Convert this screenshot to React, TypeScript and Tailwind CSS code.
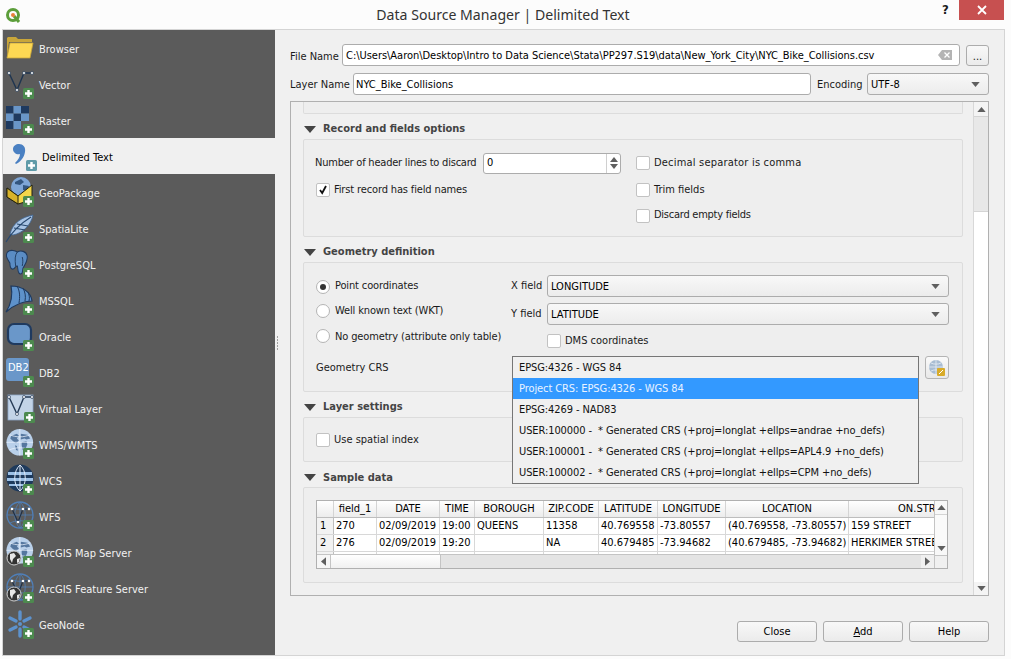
import type { ReactNode } from "react";

function Badge({ x = 18, y = 20, fill = "#4d8a4f" }: { x?: number; y?: number; fill?: string }) {
  return (
    <g transform={`translate(${x} ${y})`}>
      <rect x="0" y="0" width="11" height="11" rx="1.5" fill={fill} />
      <path d="M5.5 2v7M2 5.5h7" stroke="#fff" strokeWidth="2.4" />
    </g>
  );
}

function EarthGlobe() {
  return (
    <g transform="translate(1.500 1) scale(.95)">
      <circle cx="14" cy="14" r="14" fill="#b9d0ea" />
      <path d="M5 7l6-2 2 2-2 3 2 2-3 3-3-2-3-3zM15 5l7 1 3 4-4 1-2-1-4 1zM16 14l5-1 1 3-2 5-3 1-1-5zM9 17l2 1 1 5-2-1z" fill="#55779f" />
      <path d="M0 14h28M14 0v28M3 6c7 3 15 3 22 0M3 22c7-3 15-3 22 0" stroke="#e9f1fb" strokeWidth=".8" fill="none" />
    </g>
  );
}

function VShape({ dx = 0, dy = 0, color = "#1f3550" }: { dx?: number; dy?: number; color?: string }) {
  return (
    <g transform={`translate(${dx} ${dy})`}>
      <path d="M3 6l8 17 7-17 8 0" stroke={color} strokeWidth="1.4" fill="none" />
      <circle cx="3" cy="6" r="1.5" fill="#fff" stroke={color} strokeWidth=".7" />
      <circle cx="11" cy="23" r="1.5" fill="#fff" stroke={color} strokeWidth=".7" />
      <circle cx="18" cy="6" r="1.5" fill="#fff" stroke={color} strokeWidth=".7" />
      <circle cx="26" cy="6" r="1.5" fill="#fff" stroke={color} strokeWidth=".7" />
    </g>
  );
}

function SmallDarkGlobe() {
  return (
    <g>
      <circle cx="9" cy="22" r="7" fill="#333" stroke="#cfcfcf" strokeWidth="1" />
      <path d="M5 18l4-1 2 3-3 3-1 4-2-4zM12 23l3-1-1 4-2 1z" fill="#e6e6e6" />
    </g>
  );
}

function WfsGlobe() {
  return (
    <g transform="translate(1 1)">
      <circle cx="14" cy="14" r="13" fill="none" stroke="#4f7fb8" strokeWidth="1.3" />
      <path d="M1 14h26M14 1v26M4 6c6 3 14 3 20 0M4 22c6-3 14-3 20 0M14 1c-7 6-7 20 0 26M14 1c7 6 7 20 0 26" stroke="#4f7fb8" strokeWidth=".8" fill="none" />
      <path d="M6 8l6 13 5-13h6" stroke="#1f2f45" strokeWidth="1.2" fill="none" />
      <circle cx="6" cy="8" r="1.3" fill="#fff" />
      <circle cx="17" cy="8" r="1.3" fill="#fff" />
      <circle cx="23" cy="8" r="1.3" fill="#fff" />
      <circle cx="12" cy="21" r="1.3" fill="#fff" />
    </g>
  );
}

const icons: Record<string, ReactNode> = {
  Browser: (
    <>
      <path d="M2 6l1-1h8l2 2h14v3H4L2 25z" fill="#c9a63a" />
      <path d="M5 11h23l-3 15H2z" fill="#fdd853" stroke="#c9a63a" strokeWidth=".8" />
    </>
  ),
  Vector: (
    <>
      <VShape dx={1} dy={-1} />
      <Badge />
    </>
  ),
  Raster: (
    <>
      <path d="M1 2h7.500v7.500H1zM16 2h8v7.500h-8zM8.500 9.500H16V17H8.500zM1 17h7.500v8H1z" fill="#1f3a5f" />
      <path d="M8.500 2H16v7.500H8.500zM1 9.500h7.500V17H1zM16 9.500h8V17h-8zM8.500 17H16v8H8.500z" fill="#6996c8" />
      <Badge />
    </>
  ),
  "Delimited Text": (
    <>
      <path d="M5 9c0-3 3-5 6-5 4 0 7 3 6 8-1 6-5 10-9 12l-1-1c3-3 5-6 5-9-3 1-7-1-7-5z" fill="#4a80c2" />
      <Badge x={18} y={20} fill="#5f9ba8" />
    </>
  ),
  GeoPackage: (
    <>
      <circle cx="16" cy="11" r="10" fill="#7ea6d6" />
      <path d="M10 6l6-3 3 3-4 3-5-1zM18 9l6 1-2 5-4-1z" fill="#33567f" />
      <path d="M2 12l11 8 14-11v15l-14 4-11-7z" fill="#f3d54a" stroke="#23230f" strokeWidth="1" />
      <path d="M2 12l11 8v8l-11-7z" fill="#d8b32a" stroke="#23230f" strokeWidth="1" />
      <Badge />
    </>
  ),
  SpatiaLite: (
    <>
      <path d="M28 3C18 5 8 10 5 22l3 1C18 21 26 13 28 3z" fill="#a9c4e4" stroke="#3f6797" strokeWidth=".8" />
      <path d="M26 5C18 10 8 18 1 30M12 12l11 2M9 16l11 2" stroke="#27486f" strokeWidth="1.1" fill="none" />
      <Badge />
    </>
  ),
  PostgreSQL: (
    <>
      <g transform="translate(0 1) scale(.82 1)">
        <path d="M3 3c4-3 10-1 12 0 4-2 11-1 12 4 1 5-3 9-5 12-1 3 0 6-3 6-4 0-3-6-4-8-3 0-2 2-5 3-4 1-4-5-4-6C3 10 0 7 3 3z" fill="#5a8cc4" stroke="#1f3a5f" strokeWidth="1.200" />
        <path d="M15 3c-3 3-3 8-2 14M21 8c1 3 1 5 0 9" stroke="#1f3a5f" strokeWidth="1" fill="none" />
      </g>
      <Badge />
    </>
  ),
  MSSQL: (
    <>
      <path d="M6 2c11 0 20 6 21 15C19 17 9 21 1 28c5-8 7-17 5-26z" fill="#5e92cb" stroke="#1f3a5f" strokeWidth="1.2" />
      <path d="M12 2c3 5 3 11 2 17M18 4c2 4 3 8 2 13M23 8c1 3 2 5 1 9" stroke="#1f3a5f" strokeWidth="1" fill="none" />
      <Badge />
    </>
  ),
  Oracle: (
    <>
      <rect x="3" y="4" width="23" height="20" rx="6" fill="#6a97c9" stroke="#1f3a5f" strokeWidth="2.2" />
      <Badge />
    </>
  ),
  DB2: (
    <>
      <rect x="1" y="2" width="23" height="23" rx="3" fill="#6a97c9" />
      <text x="3" y="15" fontSize="11" fill="#fff">DB2</text>
      <Badge />
    </>
  ),
  "Virtual Layer": (
    <>
      <rect x="3" y="3" width="25" height="25" fill="#c3d4e7" stroke="#8ea9c8" strokeWidth=".8" />
      <VShape dx={1} dy={-1} color="#243a55" />
      <Badge x={19} y={20} />
    </>
  ),
  "WMS/WMTS": (
    <>
      <EarthGlobe />
      <Badge />
    </>
  ),
  WCS: (
    <>
      <g transform="translate(1 0)">
        <circle cx="14" cy="14" r="13.500" fill="#1e3a5c" />
        <path d="M2 8h24v3H2zM1 14h26v3H1zM3 20h22v2H3z" fill="#9cc0e6" />
        <path d="M14 1c-7 6-7 20 0 26M14 1c7 6 7 20 0 26M14 1v26" stroke="#dfeafa" strokeWidth="1" fill="none" />
      </g>
      <Badge />
    </>
  ),
  WFS: (
    <>
      <WfsGlobe />
      <Badge />
    </>
  ),
  "ArcGIS Map Server": (
    <>
      <EarthGlobe />
      <SmallDarkGlobe />
      <Badge />
    </>
  ),
  "ArcGIS Feature Server": (
    <>
      <WfsGlobe />
      <SmallDarkGlobe />
      <Badge />
    </>
  ),
  GeoNode: (
    <>
      <g transform="translate(1 2)">
        <path d="M14 2v7M14 19v7M4 8l6 3M18 17l6 3M4 20l6-3M18 11l6-3" stroke="#5d92cd" strokeWidth="3.400" strokeLinecap="round" />
        <circle cx="14" cy="14" r="2" fill="#5d92cd" />
      </g>
      <Badge />
    </>
  ),
};

const providers = [
  "Browser",
  "Vector",
  "Raster",
  "Delimited Text",
  "GeoPackage",
  "SpatiaLite",
  "PostgreSQL",
  "MSSQL",
  "Oracle",
  "DB2",
  "Virtual Layer",
  "WMS/WMTS",
  "WCS",
  "WFS",
  "ArcGIS Map Server",
  "ArcGIS Feature Server",
  "GeoNode",
];

function Sidebar() {
  return (
    <aside className="w-[272px] h-full bg-[#5b5b5b] shrink-0">
      {providers.map((name) => {
        const active = name === "Delimited Text";
        return (
          <div
            key={name}
            className={
              active
                ? "h-9 flex items-center bg-[#f0f0f0] text-black pl-[5px]"
                : "h-9 flex items-center text-[#f2f2f2] pl-[2px]"
            }
          >
            <svg width="34" height="32" viewBox="0 0 34 32" className="shrink-0">
              {icons[name]}
            </svg>
            <span className="pt-[4px]">{name}</span>
          </div>
        );
      })}
    </aside>
  );
}

function Arrow({ dir, className = "" }: { dir: "up" | "down" | "left" | "right"; className?: string }) {
  const d = {
    up: "M0 6L5 0l5 6z",
    down: "M0 0l5 6 5-6z",
    left: "M6 0v10L0 5z",
    right: "M0 0v10l6-5z",
  }[dir];
  const vertical = dir === "up" || dir === "down";
  return (
    <svg width={vertical ? 10 : 6} height={vertical ? 6 : 10} viewBox={vertical ? "0 0 10 6" : "0 0 6 10"} className={className}>
      <path d={d} fill="#5f5f5f" />
    </svg>
  );
}

function Combo({ text, className = "" }: { text: string; className?: string }) {
  return (
    <div className={`h-[22px] flex items-center justify-between pl-[3px] pr-[8px] border border-[#acacac] rounded-[3px] bg-gradient-to-b from-[#f8f8f8] to-[#ececec] ${className}`}>
      <span className="pt-[2px] text-black">{text}</span>
      <Arrow dir="down" className="w-[9px] h-[5px]" />
    </div>
  );
}

function Check({ on = false, label, labelClass = "" }: { on?: boolean; label: string; labelClass?: string }) {
  return (
    <div className="flex items-center gap-[4px]">
      <span className="w-[14px] h-[14px] border border-[#c2c2c2] rounded-[2px] bg-white flex items-center justify-center">
        {on && (
          <svg width="10" height="10" viewBox="0 0 10 10">
            <path d="M2 5l2.200 3L8 1" stroke="#111" strokeWidth="1.800" fill="none" />
          </svg>
        )}
      </span>
      <span className={labelClass}>{label}</span>
    </div>
  );
}

function Radio({ on = false, label, labelClass = "" }: { on?: boolean; label: string; labelClass?: string }) {
  return (
    <div className="flex items-center gap-[5px]">
      <span className="w-[14px] h-[14px] border border-[#b4b4b4] rounded-full bg-white flex items-center justify-center">
        {on && <span className="w-[6px] h-[6px] rounded-full bg-[#333]" />}
      </span>
      <span className={labelClass}>{label}</span>
    </div>
  );
}

function Section({ title, children, box, titleClass = "" }: { title: string; children?: ReactNode; box: string; titleClass?: string }) {
  return (
    <section>
      <div className="h-[25px] flex items-center gap-[7px] pt-[5px] font-bold text-[#444]">
        <svg width="12" height="7" viewBox="0 0 12 7" className="ml-[1px]">
          <path d="M0 0h12L6 7z" fill="#444" />
        </svg>
        <span className={titleClass}>{title}</span>
      </div>
      <div className={`border border-[#dcdcdc] rounded-[2px] bg-[#eeeeee] ${box}`}>{children}</div>
    </section>
  );
}

const columns = [
  { title: "field_1", w: "w-[43px]" },
  { title: "DATE", w: "w-[63px]" },
  { title: "TIME", w: "w-[35px]" },
  { title: "BOROUGH", w: "w-[69px]" },
  { title: "ZIP.CODE", w: "w-[55px]" },
  { title: "LATITUDE", w: "w-[59px]" },
  { title: "LONGITUDE", w: "w-[68px]" },
  { title: "LOCATION", w: "w-[123px]" },
  { title: "ON.STREET.NAME", w: "w-[186px]" },
];

const rows = [
  ["270", "02/09/2019", "19:00", "QUEENS", "11358", "40.769558", "-73.80557", "(40.769558, -73.80557)", "159 STREET"],
  ["276", "02/09/2019", "19:20", "", "NA", "40.679485", "-73.94682", "(40.679485, -73.94682)", "HERKIMER STREET"],
];

function SampleTable() {
  return (
    <div className="w-[632px] h-[69px] border border-[#b0b0b0] bg-white flex text-black">
      <div className="w-[617px] shrink-0 flex flex-col">
        <div className="h-[54px] overflow-hidden">
          <div className="flex h-[17px] border-b border-[#bdbdbd] whitespace-nowrap">
            <div className="w-[17px] shrink-0 border-r border-[#d4d4d4] bg-gradient-to-b from-white to-[#ececec]" />
            {columns.map((c) => (
              <div key={c.title} className={`${c.w} shrink-0 text-center border-r border-[#d4d4d4] bg-gradient-to-b from-white to-[#ececec] leading-[16px]`}>
                {c.title}
              </div>
            ))}
          </div>
          {rows.map((r, i) => (
            <div key={r[0]} className="flex h-[17px] border-b border-[#d8d8d8] whitespace-nowrap">
              <div className="w-[17px] shrink-0 pl-[3px] border-r border-[#bdbdbd] bg-[#f2f2f2] leading-[16px]">{i + 1}</div>
              {r.map((v, j) => (
                <div key={j} className={`${columns[j].w} shrink-0 px-[2px] border-r border-[#d8d8d8] leading-[16px]`}>
                  {v}
                </div>
              ))}
            </div>
          ))}
          <div className="flex h-[4px]">
            <div className="w-[17px] shrink-0 border-r border-[#bdbdbd] bg-[#f2f2f2]" />
            {columns.map((c) => (
              <div key={c.title} className={`${c.w} shrink-0 border-r border-[#d8d8d8]`} />
            ))}
          </div>
        </div>
        <div className="h-[14px] border-t border-[#c4c4c4] flex items-stretch">
          <div className="w-[14px] flex items-center justify-center border-r border-[#c4c4c4] bg-[#f6f6f6]">
            <Arrow dir="left" className="w-[5px] h-[9px]" />
          </div>
          <div className="w-[110px] border-r border-[#c4c4c4] bg-gradient-to-b from-white to-[#f0f0f0]" />
          <div className="flex-1 bg-[#e4e4e4]" />
          <div className="w-[13px] flex items-center justify-center bg-[#f0f0f0]">
            <Arrow dir="right" className="w-[5px] h-[9px]" />
          </div>
        </div>
      </div>
      <div className="flex-1 flex flex-col border-l border-[#c4c4c4]">
        <div className="h-[14px] flex items-center justify-center border-b border-[#d4d4d4] bg-[#f8f8f8]">
          <Arrow dir="up" className="w-[9px] h-[5px]" />
        </div>
        <div className="h-[27px] bg-[#fafafa]" />
        <div className="h-[13px] flex items-center justify-center bg-[#f8f8f8]">
          <Arrow dir="down" className="w-[9px] h-[5px]" />
        </div>
        <div className="flex-1 border-t border-[#c4c4c4] bg-[#f0f0f0]" />
      </div>
    </div>
  );
}

const crsOptions = [
  "EPSG:4326 - WGS 84",
  "Project CRS: EPSG:4326 - WGS 84",
  "EPSG:4269 - NAD83",
  "USER:100000 -  * Generated CRS (+proj=longlat +ellps=andrae +no_defs)",
  "USER:100001 -  * Generated CRS (+proj=longlat +ellps=APL4.9 +no_defs)",
  "USER:100002 -  * Generated CRS (+proj=longlat +ellps=CPM +no_defs)",
];

function ScrollArea() {
  return (
    <div className="mt-[6px] h-[495px] border border-[#b0b0b0] flex">
      <div className="w-[683px] pl-[12px] pr-[10px] overflow-hidden">
        <div className="h-[12px] border border-t-0 border-[#dcdcdc] rounded-b-[2px] bg-[#eeeeee]" />

        <Section title="Record and fields options" box="h-[98px] pl-[11px] pt-[10px] flex">
          <div className="w-[321px] shrink-0">
            <div className="h-[26px] flex items-center">
              <span className="w-[168px] whitespace-nowrap tracking-[-0.22px]">Number of header lines to discard</span>
              <div className="w-[138px] h-[21px] border border-[#acacac] rounded-[3px] bg-white flex items-center justify-between pl-[3px]">
                <span className="text-black">0</span>
                <div className="w-[14px] h-full border-l border-[#d0d0d0] flex flex-col items-center justify-center gap-[2px]">
                  <Arrow dir="up" className="w-[8px] h-[5px]" />
                  <Arrow dir="down" className="w-[8px] h-[5px]" />
                </div>
              </div>
            </div>
            <div className="h-[27px] flex items-center pl-[1px]">
              <Check on label="First record has field names" labelClass="pt-[2px] tracking-[-0.14px]" />
            </div>
          </div>
          <div>
            <div className="h-[26px] flex items-center"><Check label="Decimal separator is comma" labelClass="tracking-[0.2px]" /></div>
            <div className="h-[27px] flex items-center"><Check label="Trim fields" labelClass="pt-[2px]" /></div>
            <div className="h-[25px] flex items-center"><Check label="Discard empty fields" labelClass="tracking-[-0.25px]" /></div>
          </div>
        </Section>

        <Section title="Geometry definition" box="h-[130px] pl-[12px] pt-[12px]">
          <div className="flex h-[72px]">
            <div className="w-[195px] shrink-0 tracking-[-0.14px]">
              <div className="h-[23px] flex items-center"><Radio on label="Point coordinates" /></div>
              <div className="h-[25px] flex items-center"><Radio label="Well known text (WKT)" labelClass="pt-[2px]" /></div>
              <div className="h-[26px] flex items-center"><Radio label="No geometry (attribute only table)" labelClass="pt-[2px]" /></div>
            </div>
            <div className="w-[438px]">
              <div className="flex items-center h-[22px]">
                <span className="w-[36px]">X field</span>
                <Combo text="LONGITUDE" className="w-[402px]" />
              </div>
              <div className="flex items-center h-[22px] mt-[6px]">
                <span className="w-[36px]">Y field</span>
                <Combo text="LATITUDE" className="w-[402px]" />
              </div>
              <div className="mt-[8px] ml-[36px]">
                <Check label="DMS coordinates" />
              </div>
            </div>
          </div>
          <div className="flex items-start mt-[9px]">
            <span className="w-[196px] shrink-0 leading-[24px]">Geometry CRS</span>
            <div className="relative w-[407px] h-[23px] shrink-0">
              <div className="absolute left-0 top-0 w-[407px] h-[128px] z-10 border border-[#767676] bg-[#f0f0f0] whitespace-pre text-[#111] tracking-[-0.09px]">
                {crsOptions.map((o, i) => (
                  <div key={o} className={i === 1 ? "h-[21px] leading-[21px] pl-[6px] bg-[#3399ff] text-[#eaf3ff]" : "h-[21px] leading-[21px] pl-[6px]"}>
                    {o}
                  </div>
                ))}
              </div>
            </div>
            <div className="ml-[6px] w-[24px] h-[23px] border border-[#b4b4b4] rounded-[3px] bg-gradient-to-b from-[#fafafa] to-[#e8e8e8] flex items-center justify-center">
              <svg width="18" height="18" viewBox="0 0 18 18">
                <circle cx="8" cy="8" r="7" fill="#a9bdd3" />
                <path d="M1 8h14M8 1v14M3 4c3 1.500 7 1.500 10 0M3 12c3-1.500 7-1.500 10 0" stroke="#e9eff6" strokeWidth=".8" fill="none" />
                <rect x="9" y="9" width="8" height="8" rx="1" fill="#d8ab2a" />
                <path d="M11 15l4-4" stroke="#fff" strokeWidth="1" />
              </svg>
            </div>
          </div>
        </Section>

        <Section title="Layer settings" box="h-[45px] pl-[12px] flex items-center">
          <Check label="Use spatial index" labelClass="pt-[2px]" />
        </Section>

        <Section title="Sample data" titleClass="pt-[2px]" box="h-[96px] pl-[12px] pt-[12px]">
          <SampleTable />
        </Section>
      </div>

      <div className="w-[15px] border-l border-[#d8d8d8] flex flex-col bg-white">
        <div className="h-[14px] flex items-center justify-center bg-[#f4f4f4]">
          <Arrow dir="up" className="w-[9px] h-[5px]" />
        </div>
        <div className="h-[96px] bg-[#e8e8e8] border-y border-[#d4d4d4]" />
        <div className="flex-1" />
        <div className="h-[13px] flex items-center justify-center bg-[#f4f4f4]">
          <Arrow dir="down" className="w-[9px] h-[5px]" />
        </div>
      </div>
    </div>
  );
}

function DialogButton({ children }: { children: ReactNode }) {
  return (
    <button className="w-[80px] h-[21px] pt-[2px] border border-[#acacac] rounded-[3px] bg-gradient-to-b from-[#f8f8f8] to-[#ebebeb] text-black">
      {children}
    </button>
  );
}

export default function App() {
  return (
    <div className="w-[1011px] h-[659px] bg-[#fcfcfc] flex flex-col overflow-hidden text-[11px] text-[#1a1a1a] font-['DejaVu_Sans_Condensed','DejaVu_Sans',sans-serif]">
      <header className="h-[29px] flex items-center shrink-0">
        <div className="w-[76px] pl-[5px]">
          <svg width="16" height="16" viewBox="0 0 16 16">
            <circle cx="8" cy="8" r="5.500" fill="none" stroke="#5c9e3a" strokeWidth="3" />
            <path d="M9 9l5 6" stroke="#5c9e3a" strokeWidth="3" />
            <circle cx="8" cy="8" r="2" fill="#e8803a" />
          </svg>
        </div>
        <div className="flex-1 text-center pr-[5px] text-[14.1px] text-[#333] font-['Noto_Sans',sans-serif]">Data Source Manager | Delimited Text</div>
        <div className="w-[76px] h-full flex items-start">
          <span className="w-[24px] pl-[7px] leading-[20px] text-[13px] font-bold">?</span>
          <div className="w-[45px] h-[20px] bg-[#c75050] flex items-center justify-center">
            <svg width="10" height="10" viewBox="0 0 10 10">
              <path d="M1 1l8 8M9 1L1 9" stroke="#fff" strokeWidth="1.800" />
            </svg>
          </div>
        </div>
      </header>

      <div className="ml-[2px] mr-[6px] h-[627px] border border-[#d4d4d4] bg-[#f0f0f0] flex">
        <Sidebar />
        <div className="w-[15px] shrink-0 pl-[2px] flex flex-col justify-center gap-[1px]">
          {[0, 1, 2, 3, 4].map((i) => (
            <span key={i} className="w-[1px] h-[2px] bg-[#a0a0a0]" />
          ))}
        </div>
        <main className="w-[699px] pt-[14px]">
          <div className="flex items-center h-[22px]">
            <span className="w-[52px] shrink-0 pt-[4px]">File Name</span>
            <div className="w-[618px] h-[22px] border border-[#acacac] rounded-[3px] bg-white flex items-center justify-between pl-[3px] pr-[7px] text-black">
              <span className="pt-[2px] tracking-[-0.03px]">C:\Users\Aaron\Desktop\Intro to Data Science\Stata\PP297.S19\data\New_York_City\NYC_Bike_Collisions.csv</span>
              <svg width="14" height="10" viewBox="0 0 14 10">
                <path d="M4 0h10v10H4L0 5z" fill="#b4b4b4" />
                <path d="M6.500 2.500l5 5M11.500 2.500l-5 5" stroke="#fff" strokeWidth="1.300" />
              </svg>
            </div>
            <div className="ml-[6px] w-[23px] h-[21px] border border-[#acacac] rounded-[3px] bg-gradient-to-b from-[#f8f8f8] to-[#ebebeb] text-center leading-[22px]">...</div>
          </div>
          <div className="flex items-center h-[22px] mt-[7px]">
            <span className="w-[63px] shrink-0 pt-[2px]">Layer Name</span>
            <div className="w-[458px] h-[22px] border border-[#acacac] rounded-[3px] bg-white pl-[2px] leading-[22px] text-black">NYC_Bike_Collisions</div>
            <span className="ml-[6px] w-[50px] shrink-0 pt-[2px]">Encoding</span>
            <Combo text="UTF-8" className="w-[122px]" />
          </div>
          <ScrollArea />
          <div className="mt-[25px] flex justify-end gap-[6px]">
            <DialogButton>Close</DialogButton>
            <DialogButton>
              <span className="underline">A</span>dd
            </DialogButton>
            <DialogButton>Help</DialogButton>
          </div>
        </main>
      </div>
    </div>
  );
}
